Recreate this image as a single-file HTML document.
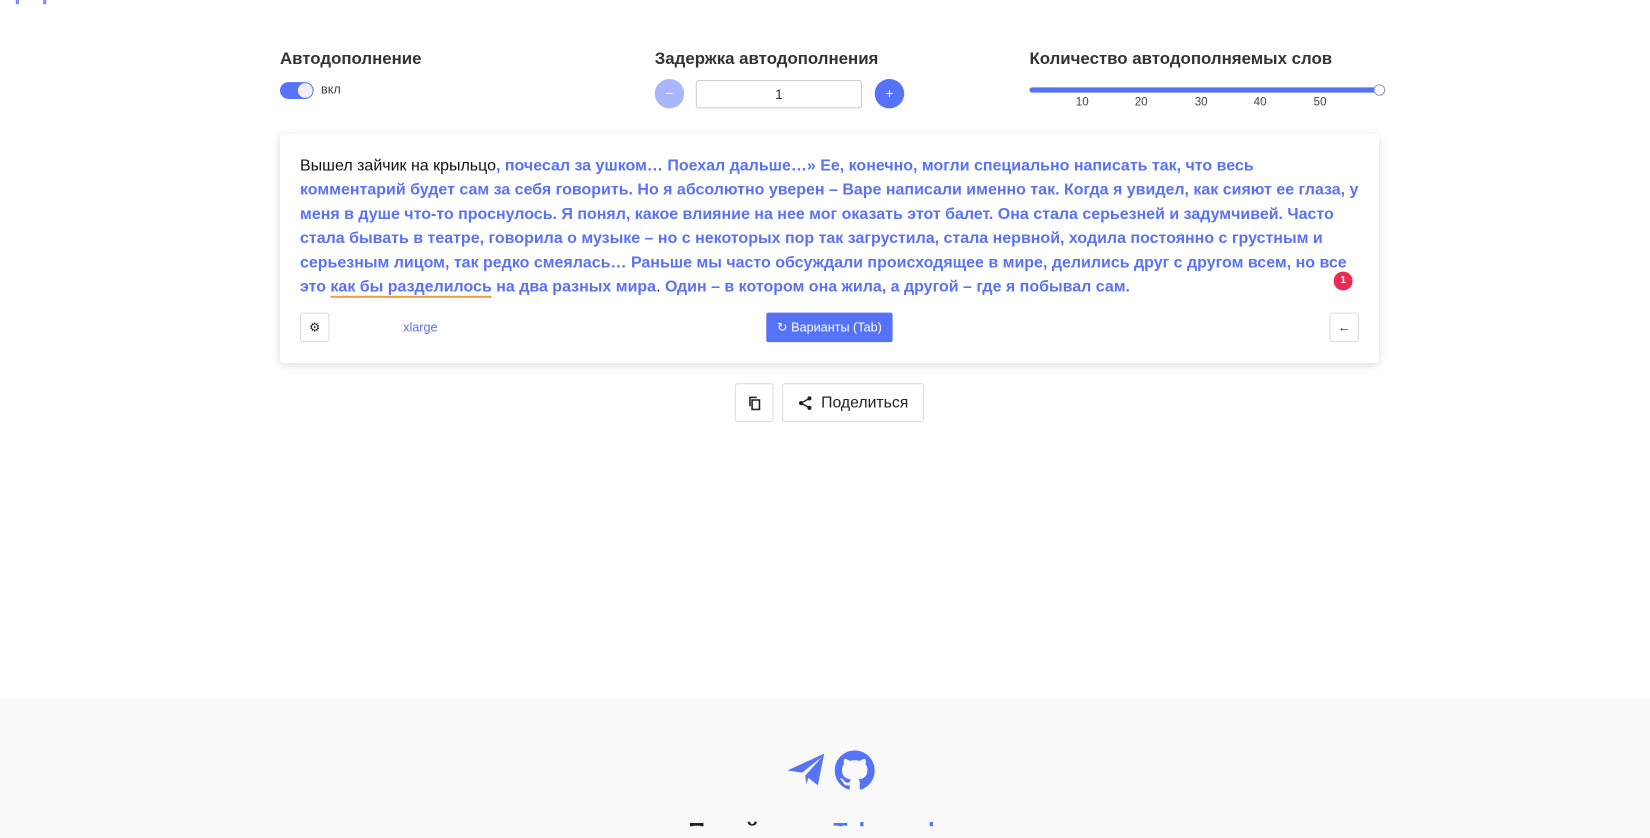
<!DOCTYPE html>
<html><head><meta charset="utf-8"><style>
*{box-sizing:border-box;margin:0;padding:0}
body{width:1650px;height:825px;overflow:hidden;background:#fff;font-family:"Liberation Sans","DejaVu Sans",sans-serif;color:#333;position:relative}
#w{position:absolute;left:0;top:0;width:1568px;height:784px;transform:scale(1.0526);transform-origin:0 0}
.abs{position:absolute}
h3{position:absolute;font-size:16px;font-weight:bold;color:#333;white-space:nowrap}
.txt{position:absolute;left:285px;top:146px;font-size:15.2px;line-height:23px;white-space:nowrap;color:#5a72f7;font-weight:bold}
.txt .n{color:#111;font-weight:normal}
.btn{position:absolute;border:1px solid #ddd;border-radius:3px;background:#fff;display:flex;align-items:center;justify-content:center}
</style></head><body>
<div class="abs" style="left:0;top:698px;width:1650px;height:140px;background:#f9f9f9"></div>
<div id="w">
<div class="abs" style="left:15px;top:0;width:3px;height:4px;background:#7b8ef8"></div>
<div class="abs" style="left:41px;top:0;width:3px;height:4px;background:#7b8ef8"></div>

<h3 style="left:266px;top:48px">Автодополнение</h3>
<div class="abs" style="left:266px;top:78px;width:32px;height:16px;border-radius:8px;background:#5672f6"></div>
<div class="abs" style="left:283px;top:79px;width:14px;height:14px;border-radius:7px;background:#f0f0f0"></div>
<div class="abs" style="left:305px;top:78px;font-size:12px;color:#444">вкл</div>

<h3 style="left:622px;top:48px">Задержка автодополнения</h3>
<div class="abs" style="left:622px;top:75px;width:28px;height:28px;border-radius:14px;background:#a9b6fb;color:#fff;text-align:center;line-height:27px;font-size:13px">−</div>
<div class="abs" style="left:661px;top:76px;width:158px;height:27px;border:1px solid #ccc;border-radius:3px;text-align:center;line-height:26px;font-size:13px;color:#333">1</div>
<div class="abs" style="left:831px;top:75px;width:28px;height:28px;border-radius:14px;background:#5672f6;color:#fff;text-align:center;line-height:27px;font-size:13px">+</div>

<h3 style="left:978px;top:48px">Количество автодополняемых слов</h3>
<div class="abs" style="left:978px;top:83px;width:332px;height:5px;border-radius:3px;background:#5672f6"></div>
<div class="abs" style="left:1305px;top:80px;width:11px;height:11px;border-radius:6px;background:#fff;border:1px solid #8d9bd8"></div>
<div class="abs" style="left:1022px;top:91px;font-size:11px;color:#444;width:364px">
<span class="abs" style="left:0">10</span><span class="abs" style="left:56px">20</span><span class="abs" style="left:113px">30</span><span class="abs" style="left:169px">40</span><span class="abs" style="left:226px">50</span></div>

<div class="abs" style="left:266px;top:127px;width:1044px;height:218px;border-radius:4px;background:#fff;box-shadow:0 2px 8px rgba(0,0,0,.13)"></div>
<div class="txt"><span class="n">Вышел зайчик на крыльцо</span>, почесал за ушком… Поехал дальше…» Ее, конечно, могли специально написать так, что весь<br>комментарий будет сам за себя говорить. Но я абсолютно уверен – Варе написали именно так. Когда я увидел, как сияют ее глаза, у<br>меня в душе что-то проснулось. Я понял, какое влияние на нее мог оказать этот балет. Она стала серьезней и задумчивей.  Часто<br>стала бывать в театре, говорила о музыке – но с некоторых пор так загрустила, стала нервной, ходила постоянно с грустным и<br>серьезным лицом, так редко смеялась… Раньше мы часто обсуждали происходящее в мире, делились друг с другом всем, но все<br>это <span style="border-bottom:2px solid #f0a040">как бы разделилось</span> на два разных мира<span class="n">.</span>  Один – в котором она жила, а другой – где я побывал сам.</div>
<div class="abs" style="left:1267px;top:258px;width:18px;height:18px;border-radius:9px;background:#ec2a55;color:#fff;font-size:10px;font-weight:bold;text-align:center;line-height:18px">1</div>

<div class="btn" style="left:285px;top:297px;width:28px;height:28px;font-size:12px;color:#222">⚙</div>
<div class="abs" style="left:383px;top:304px;font-size:12px;color:#5a72f7">xlarge</div>
<div class="abs" style="left:728px;top:297px;width:120px;height:28px;border-radius:2px;background:#5672f6;color:#fff;font-size:12px;text-align:center;line-height:28px">↻ Варианты (Tab)</div>
<div class="btn" style="left:1263px;top:297px;width:28px;height:28px;font-size:12px;color:#222">←</div>

<div class="btn" style="left:698px;top:364px;width:37px;height:37px"><svg width="14" height="14" viewBox="0 0 14 14" fill="none" stroke="#222" stroke-width="1.5"><rect x="4.5" y="4" width="7" height="9"/><path d="M2.5 10V1.5H9"/></svg></div>
<div class="btn" style="left:743px;top:364px;width:135px;height:37px;font-size:15px;color:#222;gap:8px"><svg width="14" height="14" viewBox="0 0 14 14" fill="#222"><circle cx="11" cy="2.5" r="2"/><circle cx="3" cy="7" r="2"/><circle cx="11" cy="11.5" r="2"/><path d="M3 7L11 2.5M3 7l8 4.5" stroke="#222" stroke-width="1.3"/></svg>Поделиться</div>

<svg class="abs" style="left:747px;top:715px" width="37" height="32" viewBox="0 0 37 32"><path d="M1 17L36 1 30 31 21 24 19 30 18 22 34 4 15 19Z" fill="#5672f6"/></svg>
<svg class="abs" style="left:793px;top:713px" width="38" height="38" viewBox="0 0 16 16"><path fill="#5672f6" d="M8 0C3.58 0 0 3.58 0 8c0 3.54 2.29 6.53 5.47 7.59.4.07.55-.17.55-.38v-1.33c-2.23.48-2.7-1.07-2.7-1.07-.36-.92-.89-1.17-.89-1.17-.73-.5.06-.49.06-.49.8.06 1.23.83 1.23.83.71 1.22 1.87.87 2.33.66.07-.52.28-.87.51-1.07-1.78-.2-3.64-.89-3.64-3.95 0-.87.31-1.59.82-2.15-.08-.2-.36-1.02.08-2.12 0 0 .67-.21 2.2.82.64-.18 1.32-.27 2-.27.68 0 1.36.09 2 .27 1.53-1.04 2.2-.82 2.2-.82.44 1.1.16 1.92.08 2.12.51.56.82 1.27.82 2.15 0 3.07-1.87 3.75-3.65 3.95.29.25.54.73.54 1.48v2.2c0 .21.15.46.55.38A8.013 8.013 0 0016 8c0-4.42-3.58-8-8-8z"/></svg>
<div class="abs" style="left:654px;top:779px;font-size:22px;line-height:22px;font-weight:bold;color:#222;white-space:nowrap;height:6px;overflow:hidden">Перейти <span style="color:#5672f6;margin-left:40px">Telegraph</span></div>
</div>
</body></html>
